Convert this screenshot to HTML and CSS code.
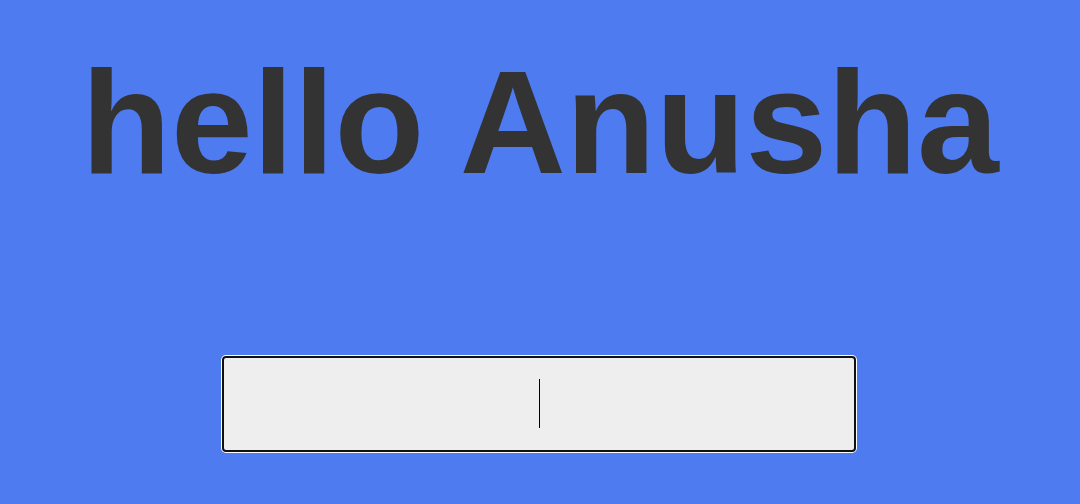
FILE: index.html
```html
<!DOCTYPE html>
<html lang="en">
<head>
<meta charset="utf-8">
<title>hello Anusha</title>
<link rel="stylesheet" href="styles.css">
</head>
<body>
<main class="page">
  <h1 class="title">hello Anusha</h1>
  <div class="field-wrap">
    <input class="field" type="text" aria-label="name" autofocus>
    <span class="caret" aria-hidden="true"></span>
  </div>
</main>
</body>
</html>
```
FILE: styles.css
```css
html, body {
  margin: 0;
  padding: 0;
}
body {
  background: #4e7bf0;
  width: 1080px;
  height: 504px;
  overflow: hidden;
  font-family: "Liberation Sans", Arial, sans-serif;
}
.page {
  display: flex;
  flex-direction: column;
  align-items: center;
}
.title {
  margin: 36px 0 0;
  font-size: 147px;
  line-height: 172px;
  font-weight: 700;
  color: #333333;
  text-align: center;
}
.field-wrap {
  position: relative;
  margin: 148px 2px 0 0;
  width: 634px;
  height: 96px;
}
.field {
  display: block;
  box-sizing: border-box;
  margin: 0;
  width: 634px;
  height: 96px;
  padding: 0;
  border: 2px solid #101010;
  border-radius: 4px;
  box-shadow: 0 0 0 1px #ffffff;
  outline: none;
  background: #eeeeee;
  font-family: "Liberation Sans", Arial, sans-serif;
  font-size: 42px;
  color: #000;
  caret-color: transparent;
  text-align: center;
}
.caret {
  position: absolute;
  left: 317px;
  top: 23px;
  width: 1px;
  height: 49px;
  background: #000;
  pointer-events: none;
}
```
